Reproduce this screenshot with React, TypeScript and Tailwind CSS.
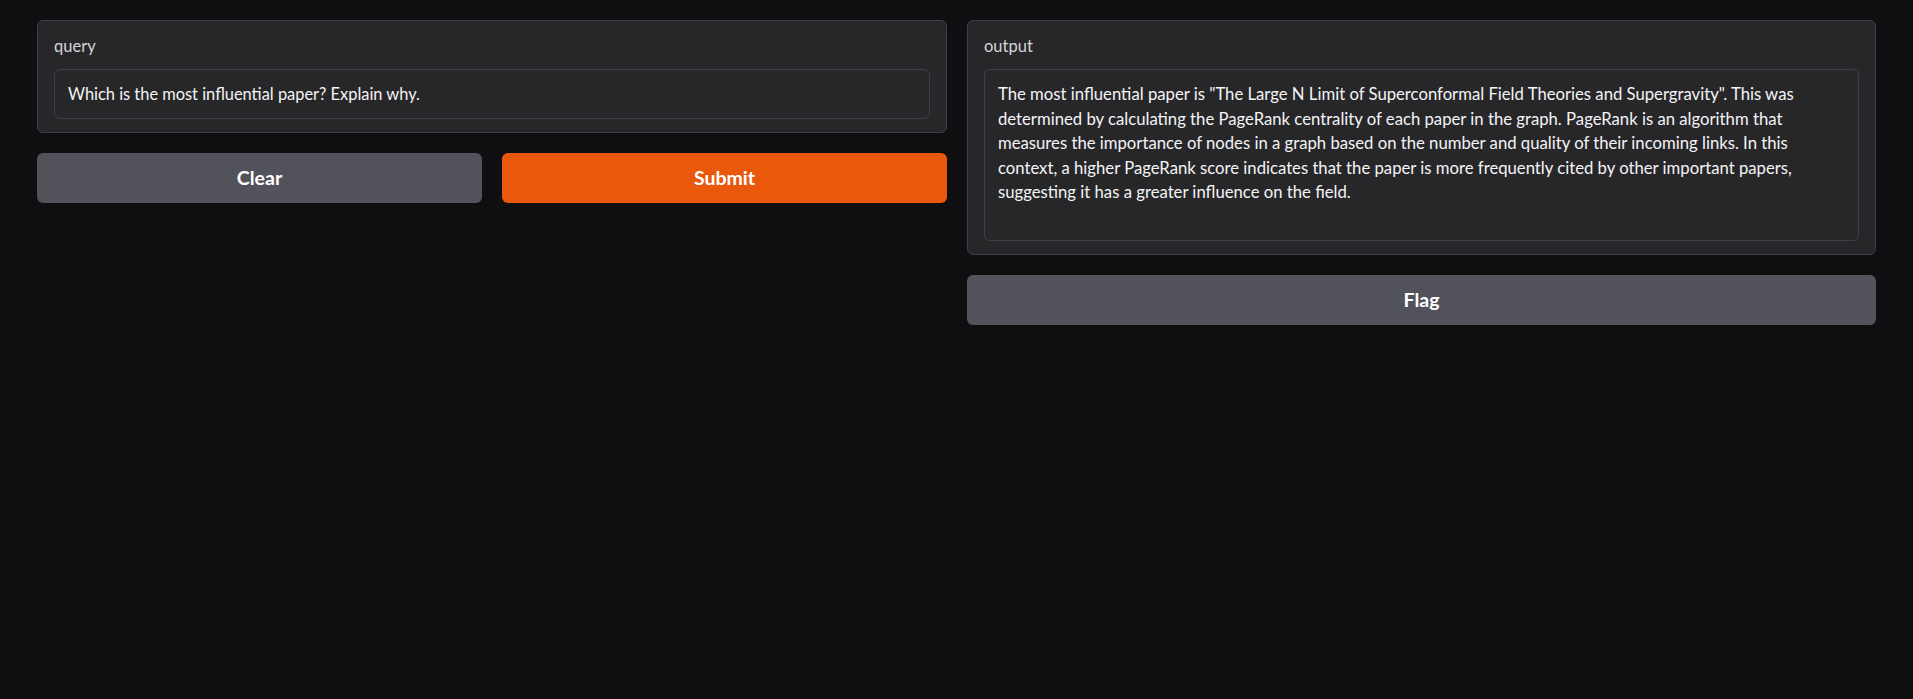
const font = { fontFamily: 'Lato, "Noto Sans", sans-serif' };

const outputText =
  'The most influential paper is "The Large N Limit of Superconformal Field Theories and Supergravity". This was determined by calculating the PageRank centrality of each paper in the graph. PageRank is an algorithm that measures the importance of nodes in a graph based on the number and quality of their incoming links. In this context, a higher PageRank score indicates that the paper is more frequently cited by other important papers, suggesting it has a greater influence on the field.';

const panel = 'rounded-md border border-[#3f3f46] bg-[#27272a] px-4 pt-[15px] pb-[13px]';
const label = 'block text-[16.5px] leading-[21px] text-[#d4d4d8] mb-[12px]';
const box = 'rounded-md border border-[#3f3f46] bg-[#27272a] px-[13px] text-[#f4f4f5]';
const btn = 'h-[50px] rounded-md text-[19.5px] font-bold text-white';

export default function App() {
  return (
    <div className="min-h-screen bg-[#0f0f11] px-[37px] pt-[20px]" style={font}>
      <div className="flex gap-5">
        <div className="flex w-[910px] flex-col gap-5">
          <div className={panel}>
            <span className={label}>query</span>
            <div className={`${box} flex h-[50px] items-center text-[16.4px]`}>
              Which is the most influential paper? Explain why.
            </div>
          </div>
          <div className="flex gap-5">
            <button className={`${btn} flex-1 bg-[#52525b]`}>Clear</button>
            <button className={`${btn} flex-1 bg-[#ea580c]`}>Submit</button>
          </div>
        </div>
        <div className="flex flex-1 flex-col gap-5">
          <div className={panel}>
            <span className={label}>output</span>
            <div className={`${box} h-[172px] pt-[12px] text-[16.7px] leading-[24.5px]`}>
              <div className="pr-[30px]">{outputText}</div>
            </div>
          </div>
          <button className={`${btn} w-full bg-[#52525b]`}>Flag</button>
        </div>
      </div>
    </div>
  );
}
